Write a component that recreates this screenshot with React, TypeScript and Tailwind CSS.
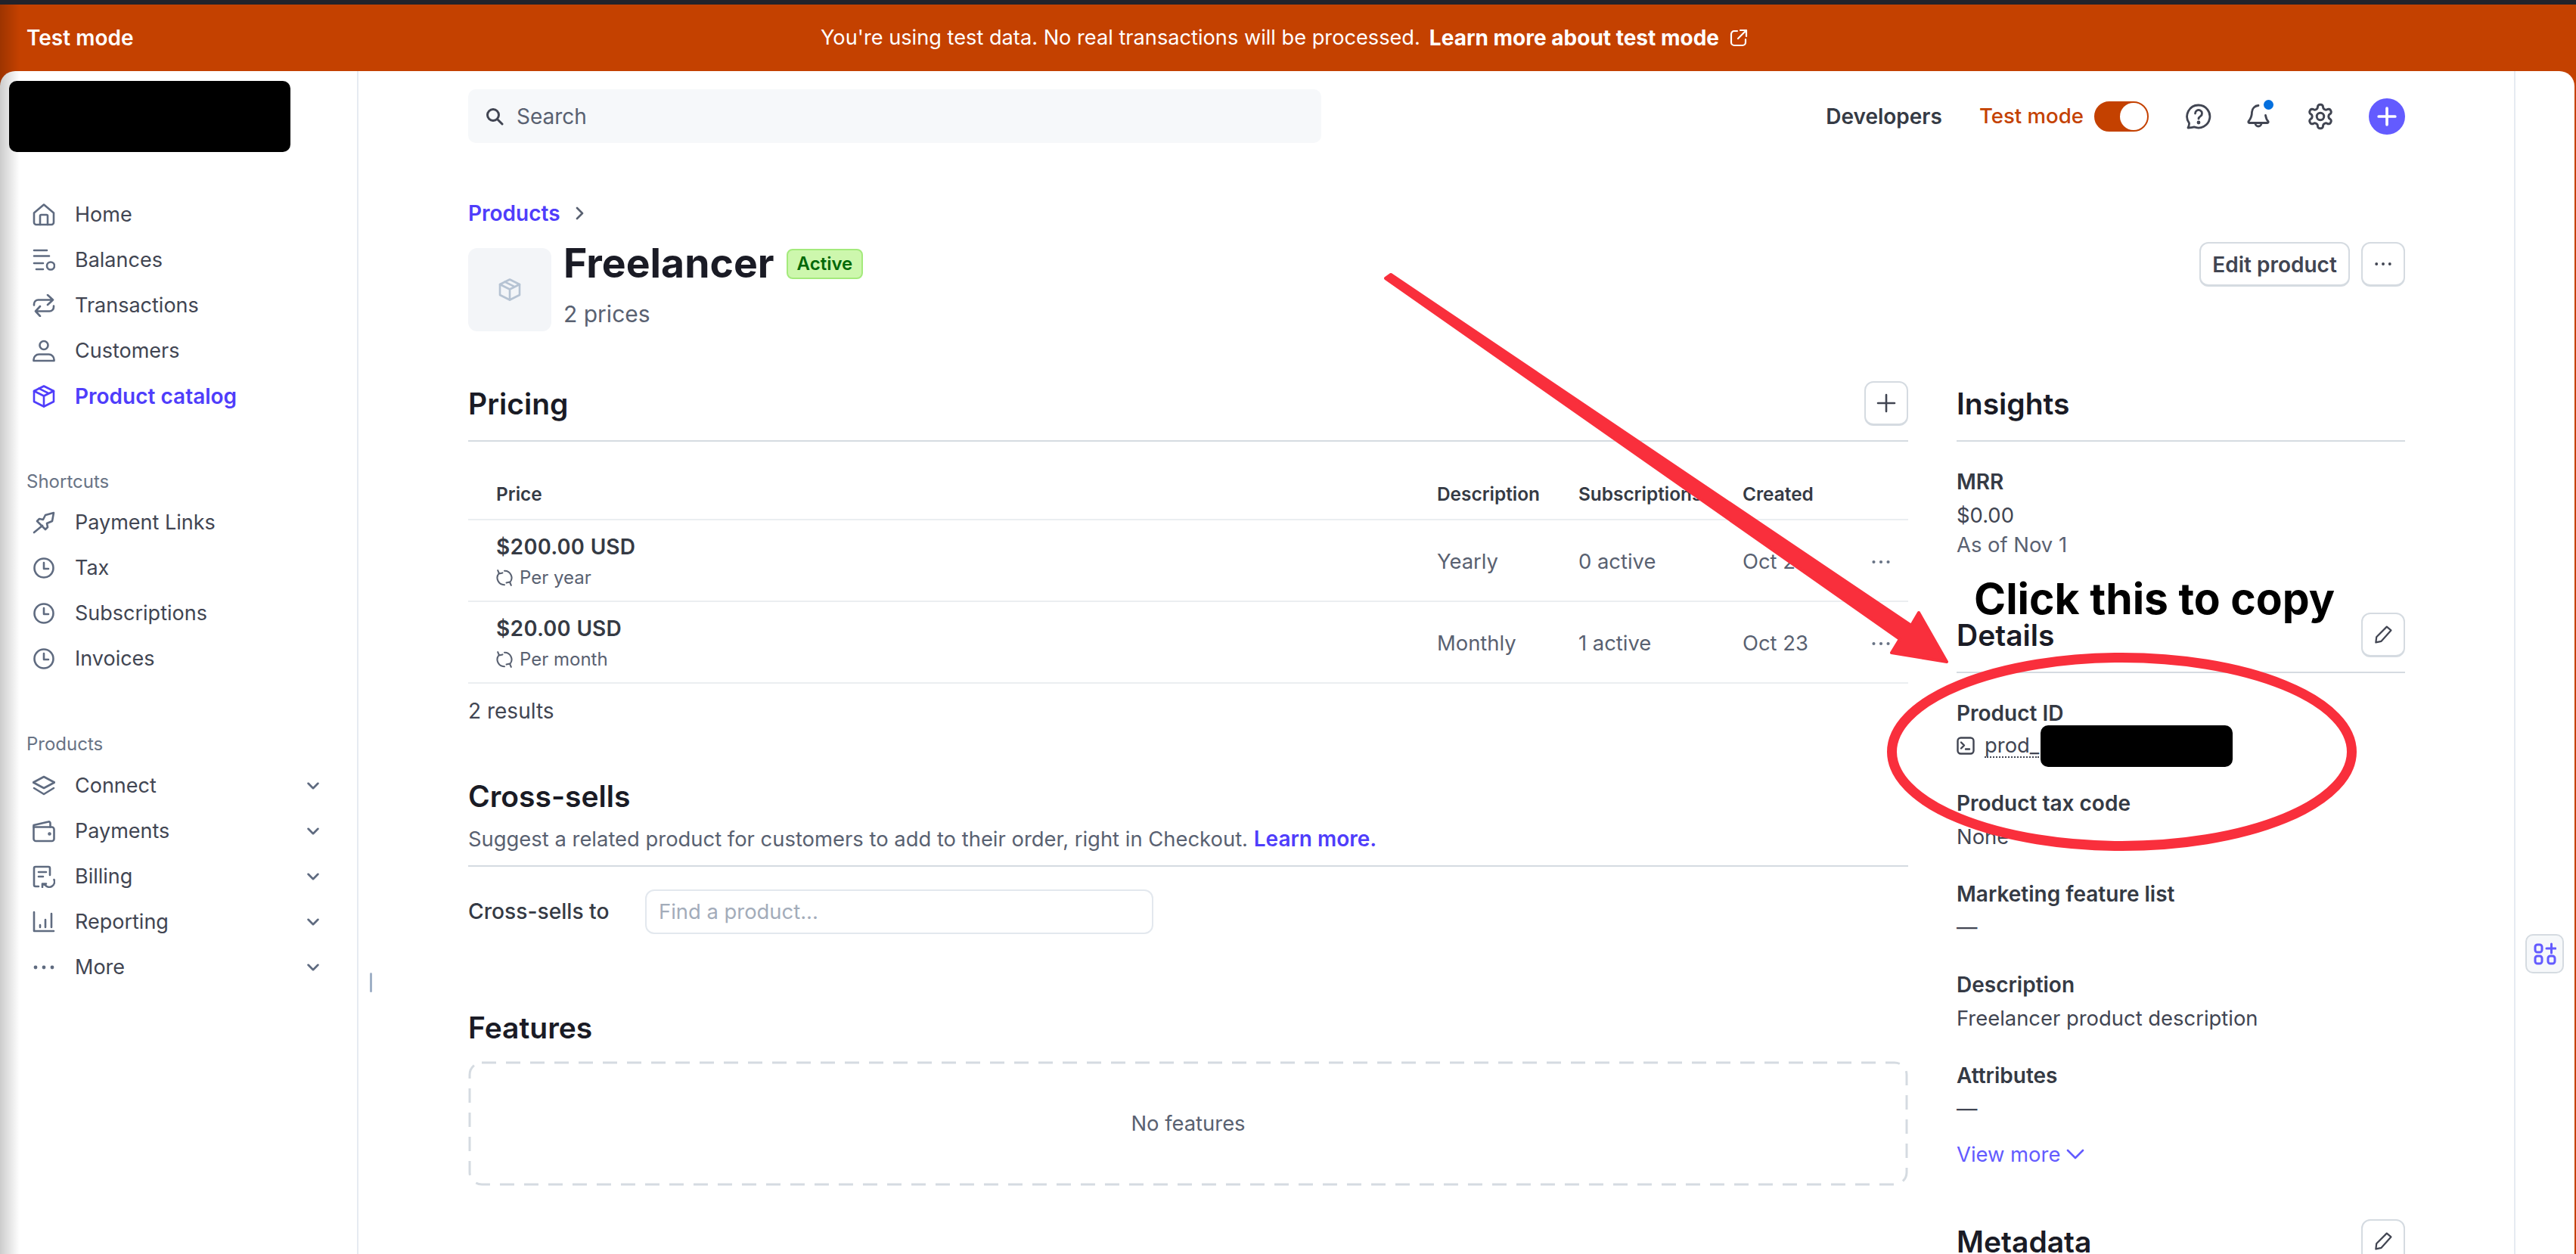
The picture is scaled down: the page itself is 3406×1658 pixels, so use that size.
import type { ReactNode } from "react";

const Icon = ({ size = 30, className = "", sw = 2.6, children }: { size?: number; className?: string; sw?: number; children: ReactNode }) => (
  <svg
    width={size}
    height={size}
    viewBox="0 0 30 30"
    fill="none"
    stroke="currentColor"
    strokeWidth={sw}
    strokeLinecap="round"
    strokeLinejoin="round"
    className={`shrink-0 ${className}`}
  >
    {children}
  </svg>
);

const HomeIcon = () => (
  <Icon>
    <path d="M2 12.5 15 1.5l13 11V25a3 3 0 0 1-3 3H5a3 3 0 0 1-3-3Z" />
    <path d="M10 28V16.5a1.5 1.5 0 0 1 1.5-1.5h7a1.5 1.5 0 0 1 1.5 1.5V28" />
  </Icon>
);
const BalancesIcon = () => (
  <Icon>
    <path d="M2 2h17M2 9.5h20M2 19h12M5 27h9" />
    <circle cx="24" cy="22.5" r="5" />
  </Icon>
);
const TransactionsIcon = () => (
  <Icon>
    <path d="M2 14.5V13a5.5 5.5 0 0 1 5.5-5.5H27M20 1l7 6.5-7 6.5" />
    <path d="M28 15.5V17a5.5 5.5 0 0 1-5.5 5.5H4M10 29l-6-6.5 6-6.5" />
  </Icon>
);
const CustomersIcon = () => (
  <Icon>
    <circle cx="15" cy="7.5" r="5.5" />
    <path d="M1.5 28v-1.5a7 7 0 0 1 7-7h13a7 7 0 0 1 7 7V28Z" />
  </Icon>
);
const BoxIcon = ({ size = 30 }: { size?: number }) => (
  <Icon size={size}>
    <path d="M15 1.5 28 8v14l-13 6.5L2 22V8Z" />
    <path d="M2 8l13 6.5L28 8M15 14.5v14M8.5 4.7l13 6.5" />
  </Icon>
);
const PinIcon = () => (
  <Icon>
    <path d="M17 5 28 2l-2 11-7 3 1 5-3 3L6 13l3-3 5 1Z" />
    <path d="M2 28l11-9" />
  </Icon>
);
const ClockIcon = () => (
  <Icon>
    <circle cx="15" cy="15" r="12.5" />
    <path d="M15 8v8h6" />
  </Icon>
);
const ConnectIcon = () => (
  <Icon>
    <path d="M15 3 29 10.5 15 18 1 10.5Z" />
    <path d="M2 18l13 8 13-8" />
  </Icon>
);
const WalletIcon = () => (
  <Icon>
    <path d="M1.5 9.5h24a3 3 0 0 1 3 3V25a3 3 0 0 1-3 3h-21a3 3 0 0 1-3-3Z" />
    <path d="M1.5 9.5V7L21 2.5a2 2 0 0 1 2.5 2v5" />
    <circle cx="22.5" cy="18.5" r="1" />
  </Icon>
);
const BillingIcon = () => (
  <Icon>
    <path d="M8 28H4a2 2 0 0 1-2-2V4a2 2 0 0 1 2-2h17a2 2 0 0 1 2 2v9" />
    <path d="M8 9h10M8 15h6" />
    <path d="M28.5 19a7 7 0 0 1-12 7l-3-1M13 29v-4.5h5" />
  </Icon>
);
const ReportingIcon = () => (
  <Icon>
    <path d="M2 2v25h26M10 19v3M17 12v10M25 4v18" />
  </Icon>
);
const MoreIcon = ({ size = 30, className = "" }: { size?: number; className?: string }) => (
  <Icon size={size} className={className} sw={0}>
    <circle cx="4" cy="15" r="2.4" fill="currentColor" />
    <circle cx="15" cy="15" r="2.4" fill="currentColor" />
    <circle cx="26" cy="15" r="2.4" fill="currentColor" />
  </Icon>
);
const ChevronDown = ({ size = 16 }: { size?: number }) => (
  <Icon size={size} sw={5}>
    <path d="M3 9l12 12L27 9" />
  </Icon>
);
const RecurIcon = () => (
  <Icon size={22} sw={2.8}>
    <path d="M15 27.5A12.5 12.5 0 0 1 5 7M3 1.5l2.5 6 6-1.5" />
    <path d="M15 2.5A12.5 12.5 0 0 1 25 23M27 28.5l-2.5-6-6 1.5" />
  </Icon>
);
const PencilIcon = () => (
  <Icon size={24} sw={2.8}>
    <path d="M21 2l7 6-16 18-9 2 1-9Z" />
  </Icon>
);

const NavItem = ({ icon, label, active, chevron }: { icon: ReactNode; label: string; active?: boolean; chevron?: boolean }) => (
  <div className={`flex h-[60px] items-center pl-[43px] pr-[50px] ${active ? "text-[28px] font-semibold text-[#4f3dfb]" : "text-[27px] text-[#414552]"}`}>
    <span className={active ? "text-[#4f3dfb]" : "text-[#5f6b80]"}>{icon}</span>
    <span className="ml-[26px] flex-1">{label}</span>
    {chevron && (
      <span className="text-[#5f6b80]">
        <ChevronDown />
      </span>
    )}
  </div>
);

const SideLabel = ({ children, className = "" }: { children: ReactNode; className?: string }) => (
  <div className={`pl-[35px] text-[24px] leading-[30px] text-[#687385] ${className}`}>{children}</div>
);

const SectionTitle = ({ children }: { children: ReactNode }) => (
  <h2 className="text-[39px] leading-[48px] font-semibold text-[#1a1b25]">{children}</h2>
);

const OutlineButton = ({ children, className = "" }: { children: ReactNode; className?: string }) => (
  <button className={`flex h-[59px] items-center justify-center rounded-[12px] border-2 border-b-[3px] border-[#d5dbe1] bg-white text-[#414552] ${className}`}>
    {children}
  </button>
);

const Field = ({ label, children, className = "" }: { label: string; children: ReactNode; className?: string }) => (
  <div className={`text-[27.4px] leading-[34px] ${className}`}>
    <div className="text-[28px] font-semibold text-[#353a44]">{label}</div>
    <div className="mt-[10px] text-[#414552]">{children}</div>
  </div>
);

const PriceRow = ({ price, period, description, subs, created }: { price: string; period: string; description: string; subs: string; created: string }) => (
  <div className="flex h-[108px] items-center border-b-2 border-[#ebeef1] pt-[3px] pl-[37px] text-[27.4px] text-[#596171]">
    <div className="w-[1244px]">
      <div className="text-[28px] leading-[34px] font-semibold tracking-[0.1px] text-[#353a44] tabular-nums">{price}</div>
      <div className="mt-[9px] flex items-center text-[24px] leading-[30px]">
        <RecurIcon />
        <span className="ml-[9px]">{period}</span>
      </div>
    </div>
    <div className="w-[187px]">{description}</div>
    <div className="w-[217px]">{subs}</div>
    <div className="w-[170px]">{created}</div>
    <MoreIcon size={26} className="text-[#687385]" />
  </div>
);

export default function App() {
  return (
    <div className="relative flex h-[1658px] w-[3406px] flex-col overflow-hidden bg-[#c44100] [font-family:Inter,sans-serif]">
      <div className="h-[6px] shrink-0 bg-[#22232b]" />

      {/* test mode banner */}
      <div className="grid h-[88px] shrink-0 grid-cols-[1fr_auto_1fr] items-center px-[35px] text-white">
        <div className="text-[28px] font-semibold">Test mode</div>
        <div className="mr-[10px] flex items-center text-[27.2px]">
          <span>You're using test data. No real transactions will be processed.</span>
          <span className="ml-[12px] text-[28px] font-bold">Learn more about test mode</span>
          <svg width="24" height="24" viewBox="0 0 24 24" fill="none" stroke="currentColor" strokeWidth="2.2" strokeLinecap="round" strokeLinejoin="round" className="ml-[14px]">
            <path d="M10 3H6a4 4 0 0 0-4 4v11a4 4 0 0 0 4 4h11a4 4 0 0 0 4-4v-4M14 2h8v8M22 2 11 13" />
          </svg>
        </div>
        <div />
      </div>

      <div className="mr-[2px] flex min-h-0 flex-1 overflow-hidden rounded-t-[20px] bg-white">
        {/* sidebar */}
        <aside className="w-[474px] shrink-0 border-r-2 border-[#e6ebf1]">
          <div className="mt-[13px] ml-[12px] h-[94px] w-[372px] rounded-[10px] bg-black" />
          <nav className="mt-[53px]">
            <NavItem icon={<HomeIcon />} label="Home" />
            <NavItem icon={<BalancesIcon />} label="Balances" />
            <NavItem icon={<TransactionsIcon />} label="Transactions" />
            <NavItem icon={<CustomersIcon />} label="Customers" />
            <NavItem icon={<BoxIcon />} label="Product catalog" active />
          </nav>
          <SideLabel className="mt-[68px]">Shortcuts</SideLabel>
          <nav className="mt-[9px]">
            <NavItem icon={<PinIcon />} label="Payment Links" />
            <NavItem icon={<ClockIcon />} label="Tax" />
            <NavItem icon={<ClockIcon />} label="Subscriptions" />
            <NavItem icon={<ClockIcon />} label="Invoices" />
          </nav>
          <SideLabel className="mt-[68px]">Products</SideLabel>
          <nav className="mt-[10px]">
            <NavItem icon={<ConnectIcon />} label="Connect" chevron />
            <NavItem icon={<WalletIcon />} label="Payments" chevron />
            <NavItem icon={<BillingIcon />} label="Billing" chevron />
            <NavItem icon={<ReportingIcon />} label="Reporting" chevron />
            <NavItem icon={<MoreIcon />} label="More" chevron />
          </nav>
        </aside>

        {/* main column */}
        <main className="min-w-0 flex-1 pr-[144px] pl-[145px]">
          <header className="mt-[24px] flex h-[71px] items-center justify-between">
            <div className="flex h-[71px] w-[1128px] items-center rounded-[10px] bg-[#f6f8fa] pl-[23px] text-[28px] text-[#596171]">
              <svg width="24" height="24" viewBox="0 0 24 24" fill="none" stroke="#414552" strokeWidth="3" strokeLinecap="round">
                <circle cx="10" cy="10" r="7.5" />
                <path d="M16 16l6 6" />
              </svg>
              <span className="ml-[17px]">Search</span>
            </div>
            <div className="flex items-center text-[28px]">
              <span className="font-semibold text-[#353a44]">Developers</span>
              <span className="ml-[49px] text-[27.6px] font-medium text-[#c44100]">Test mode</span>
              <div className="ml-[14px] flex h-[40px] w-[72px] items-center justify-end rounded-full border-2 border-[#c44100] bg-[#c44100]">
                <div className="h-[36px] w-[36px] rounded-full bg-white" />
              </div>
              <svg width="34" height="34" viewBox="0 0 34 34" fill="none" stroke="#414552" strokeWidth="2.8" strokeLinecap="round" strokeLinejoin="round" className="ml-[49px]">
                <path d="M17 2a15 15 0 1 1-6 28.8c-2 .6-5 1-8 1.2 1-2 1.8-4 1.5-6.3A15 15 0 0 1 17 2Z" />
                <path d="M12.5 13a4.5 4.5 0 1 1 7 3.7c-1.7 1.1-2.5 2-2.5 3.3" />
                <circle cx="17" cy="25" r="1" fill="#414552" />
              </svg>
              <div className="relative ml-[45px] h-[34px] w-[34px]">
                <svg width="34" height="34" viewBox="0 0 34 34" fill="none" stroke="#414552" strokeWidth="2.8" strokeLinecap="round" strokeLinejoin="round">
                  <path d="M17 2.5a9 9 0 0 0-8.5 8.5c0 6-1.5 9-4.5 12.5-.5 1 0 2 1 2h24c1 0 1.5-1 1-2-2-2-3-5-3.5-8" />
                  <path d="M13 26a4 4 0 0 0 8 0" />
                </svg>
                <div className="absolute top-[-5px] right-[-3px] h-[13px] w-[13px] rounded-full bg-[#0570de]" />
              </div>
              <svg width="38" height="38" viewBox="0 0 24 24" fill="none" stroke="#414552" strokeWidth="1.9" strokeLinecap="round" strokeLinejoin="round" className="ml-[46px]">
                <path d="M12.22 2h-.44a2 2 0 0 0-2 2v.18a2 2 0 0 1-1 1.73l-.43.25a2 2 0 0 1-2 0l-.15-.08a2 2 0 0 0-2.73.73l-.22.38a2 2 0 0 0 .73 2.73l.15.1a2 2 0 0 1 1 1.72v.51a2 2 0 0 1-1 1.74l-.15.09a2 2 0 0 0-.73 2.73l.22.38a2 2 0 0 0 2.73.73l.15-.08a2 2 0 0 1 2 0l.43.25a2 2 0 0 1 1 1.73V20a2 2 0 0 0 2 2h.44a2 2 0 0 0 2-2v-.18a2 2 0 0 1 1-1.73l.43-.25a2 2 0 0 1 2 0l.15.08a2 2 0 0 0 2.73-.73l.22-.39a2 2 0 0 0-.73-2.73l-.15-.08a2 2 0 0 1-1-1.74v-.5a2 2 0 0 1 1-1.74l.15-.09a2 2 0 0 0 .73-2.73l-.22-.38a2 2 0 0 0-2.73-.73l-.15.08a2 2 0 0 1-2 0l-.43-.25a2 2 0 0 1-1-1.73V4a2 2 0 0 0-2-2z" />
                <circle cx="12" cy="12" r="3" />
              </svg>
              <div className="ml-[45px] flex h-[48px] w-[48px] items-center justify-center rounded-full bg-[#635bff]">
                <svg width="26" height="26" viewBox="0 0 24 24" stroke="white" strokeWidth="3.4" strokeLinecap="round">
                  <path d="M12 2v20M2 12h20" />
                </svg>
              </div>
            </div>
          </header>

          <div className="mt-[76px] flex h-[34px] items-center text-[28px] font-semibold text-[#4f3dfb]">
            Products
            <svg width="16" height="18" viewBox="0 0 16 18" fill="none" stroke="#596171" strokeWidth="2.6" strokeLinecap="round" strokeLinejoin="round" className="ml-[17px]">
              <path d="M5 2l7 7-7 7" />
            </svg>
          </div>

          <div className="mt-[21px] flex h-[118px] items-start justify-between">
            <div className="flex items-start">
              <div className="mt-[8px] flex h-[110px] w-[110px] items-center justify-center rounded-[12px] bg-[#f3f5f8] text-[#b6c3d3]">
                <BoxIcon />
              </div>
              <div className="ml-[16px]">
                <div className="flex h-[56px] items-center">
                  <h1 className="text-[53.5px] leading-[56px] font-bold text-[#1a1b25]">Freelancer</h1>
                  <span className="mt-[1px] ml-[16px] flex h-[40px] items-center rounded-[8px] border-2 border-[#a4ea7c] bg-[#cdf7ad] px-[12px] text-[24px] font-semibold text-[#006908]">Active</span>
                </div>
                <div className="mt-[21px] text-[30px] leading-[36px] text-[#596171]">2 prices</div>
              </div>
            </div>
            <div className="flex items-center gap-[15px]">
              <OutlineButton className="w-[199px] pt-[2px] text-[28px] font-semibold text-[#353a44]">Edit product</OutlineButton>
              <OutlineButton className="w-[58px]">
                <MoreIcon size={24} />
              </OutlineButton>
            </div>
          </div>

          <div className="mt-[66px] flex items-start gap-[64px]">
            {/* left column */}
            <section className="w-[1904px] shrink-0">
              <div className="flex items-center justify-between border-b-2 border-[#d5dbe1] pb-[19px]">
                <SectionTitle>Pricing</SectionTitle>
                <OutlineButton className="w-[58px]">
                  <svg width="26" height="26" viewBox="0 0 26 26" stroke="#414552" strokeWidth="2.6" strokeLinecap="round">
                    <path d="M13 2v22M2 13h22" />
                  </svg>
                </OutlineButton>
              </div>

              <div className="mt-[34px] flex h-[70px] items-center border-b-2 border-[#ebeef1] pt-[2px] pl-[37px] text-[24.4px] font-semibold text-[#353a44]">
                <div className="w-[1244px]">Price</div>
                <div className="w-[187px]">Description</div>
                <div className="w-[217px]">Subscriptions</div>
                <div>Created</div>
              </div>
              <PriceRow price="$200.00 USD" period="Per year" description="Yearly" subs="0 active" created="Oct 23" />
              <PriceRow price="$20.00 USD" period="Per month" description="Monthly" subs="1 active" created="Oct 23" />
              <div className="mt-[19px] text-[28px] leading-[34px] text-[#414552]">2 results</div>

              <div className="mt-[72px]">
                <SectionTitle>Cross-sells</SectionTitle>
                <div className="mt-[15px] border-b-2 border-[#d5dbe1] pb-[18px] text-[27.4px] leading-[34px] text-[#596171]">
                  Suggest a related product for customers to add to their order, right in Checkout.{" "}
                  <span className="text-[28px] font-semibold text-[#4f3dfb]">Learn more.</span>
                </div>
                <div className="mt-[30px] flex items-center">
                  <span className="w-[234px] text-[28.2px] font-medium text-[#353a44]">Cross-sells to</span>
                  <div className="flex h-[59px] w-[672px] items-center rounded-[12px] border-2 border-[#e3e8ee] pl-[16px] text-[27.4px] text-[#a3acba]">Find a product...</div>
                </div>
              </div>

              <div className="mt-[100px]">
                <SectionTitle>Features</SectionTitle>
                <div className="relative mt-[20px] flex h-[165px] items-center justify-center text-[27.4px] text-[#596171]">
                  <svg width="1904" height="165" className="absolute inset-0" fill="none" stroke="#d5dbe1" strokeWidth="3" strokeDasharray="19 13">
                    <rect x="2" y="2" width="1900" height="161" rx="16" />
                  </svg>
                  No features
                </div>
              </div>
            </section>

            {/* right column */}
            <section className="min-w-0 flex-1">
              <div className="flex h-[80px] items-center border-b-2 border-[#d5dbe1] pb-[19px]">
                <SectionTitle>Insights</SectionTitle>
              </div>
              <Field label="MRR" className="mt-[36px]">
                <div>$0.00</div>
                <div className="mt-[5px] text-[#596171]">As of Nov 1</div>
              </Field>

              <div className="mt-[73px] flex items-center justify-between border-b-2 border-[#d5dbe1] pb-[19px]">
                <SectionTitle>Details</SectionTitle>
                <OutlineButton className="w-[58px]">
                  <PencilIcon />
                </OutlineButton>
              </div>
              <Field label="Product ID" className="mt-[36px]">
                <div className="flex items-center">
                  <svg width="24" height="24" viewBox="0 0 24 24" fill="none" stroke="#414552" strokeWidth="2.4" strokeLinecap="round" strokeLinejoin="round">
                    <rect x="1.5" y="1.5" width="21" height="21" rx="4" />
                    <path d="M6 7.5l4 4-4 4M12 16.5h5" />
                  </svg>
                  <span className="ml-[13px] border-b-2 border-dotted border-[#414552] leading-[30px]">prod_</span>
                </div>
              </Field>
              <Field label="Product tax code" className="mt-[43px]">None</Field>
              <Field label="Marketing feature list" className="mt-[42px]">—</Field>
              <Field label="Description" className="mt-[42px]">Freelancer product description</Field>
              <Field label="Attributes" className="mt-[42px]">—</Field>
              <div className="mt-[26px] flex items-center text-[27.4px] leading-[34px] text-[#635bff]">
                View more
                <svg width="24" height="16" viewBox="0 0 24 16" fill="none" stroke="currentColor" strokeWidth="2.6" strokeLinecap="round" strokeLinejoin="round" className="ml-[8px]">
                  <path d="M2 3l10 10L22 3" />
                </svg>
              </div>
              <div className="mt-[69px] flex items-center justify-between">
                <SectionTitle>Metadata</SectionTitle>
                <OutlineButton className="w-[58px]">
                  <PencilIcon />
                </OutlineButton>
              </div>
            </section>
          </div>
        </main>

        {/* right rail */}
        <div className="w-[80px] shrink-0 border-l-2 border-[#e6ebf1] pt-[1141px] pl-[13px]">
          <div className="flex h-[52px] w-[51px] items-center justify-center rounded-[10px] border-2 border-[#d5dbe1] bg-[#f6f8fa]">
            <svg width="30" height="30" viewBox="0 0 30 30" fill="none" stroke="#635bff" strokeWidth="3" strokeLinecap="round">
              <rect x="2" y="3" width="9" height="10" rx="3" />
              <rect x="2" y="18" width="9" height="10" rx="3" />
              <rect x="19" y="18" width="9" height="10" rx="3" />
              <path d="M23.5 2v12M17 8h12" />
            </svg>
          </div>
        </div>
      </div>

      {/* window shadow on the left edge */}
      <div className="pointer-events-none absolute top-[6px] bottom-0 left-0 w-[26px] bg-gradient-to-r from-black/20 to-transparent" />
      {/* scrollbar grip */}
      <div className="absolute top-[1286px] left-[489px] h-[26px] w-[3px] rounded-full bg-[#9fb0c6]" />

      {/* redactions and annotation drawn over the page */}
      <div className="absolute top-[959px] left-[2698px] h-[55px] w-[254px] rounded-[10px] bg-black" />
      <svg width="3406" height="1658" className="pointer-events-none absolute inset-0" fill="none">
        <path d="M1832 368 1839 363 2527 827 2537 810 2574 875 2501 863 2512 845Z" fill="#f92f3c" stroke="#f92f3c" strokeWidth="4" strokeLinejoin="round" />
        <ellipse cx="2805.5" cy="994" rx="304" ry="124.5" stroke="#f92f3c" strokeWidth="13" />
      </svg>
      <div className="absolute top-[757px] left-[2610px] text-[57px] leading-[70px] font-bold whitespace-nowrap text-black">Click this to copy</div>
    </div>
  );
}
